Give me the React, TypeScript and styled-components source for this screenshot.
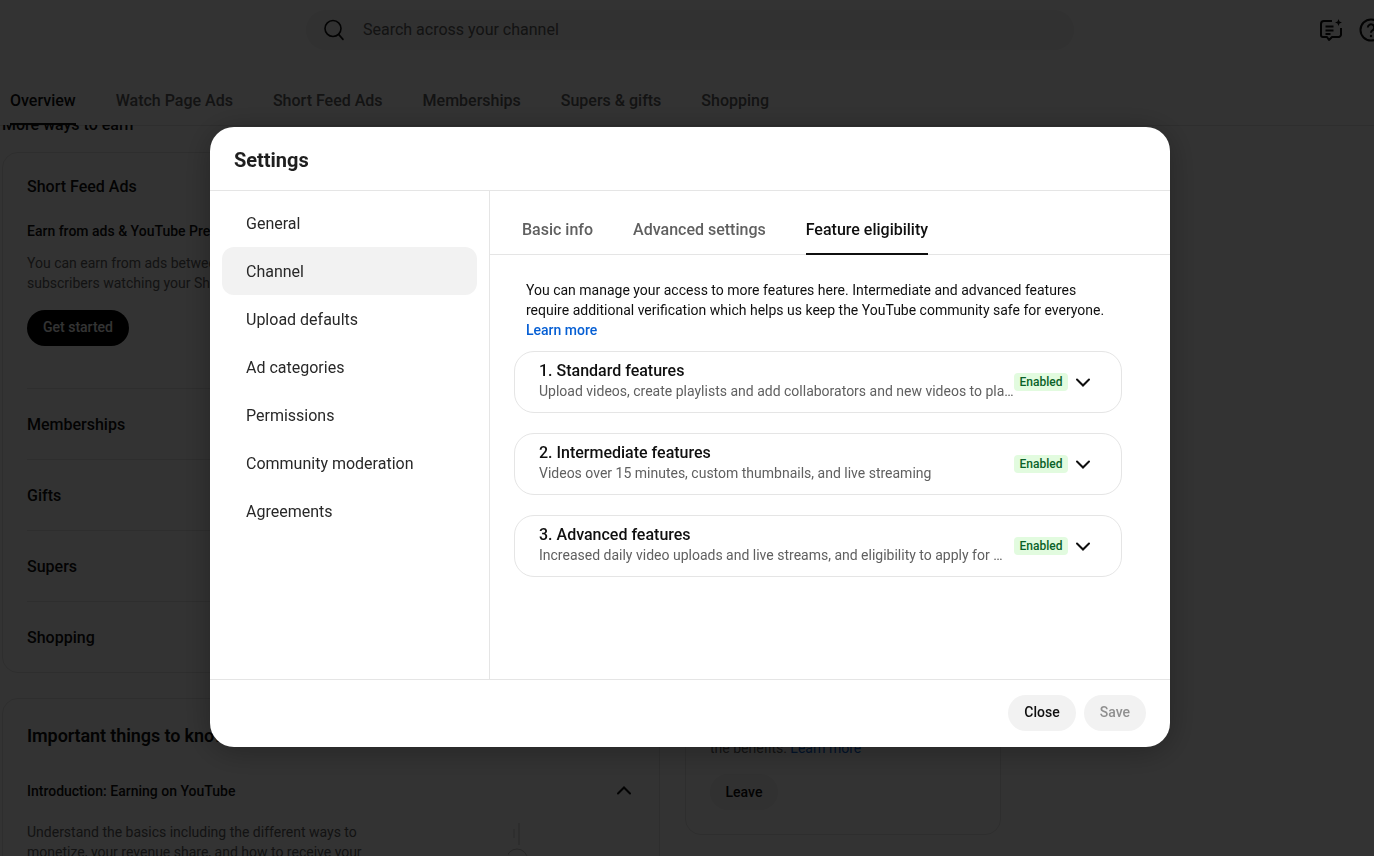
import styled, { createGlobalStyle } from "styled-components";

const GlobalStyle = createGlobalStyle`
  html, body {
    margin: 0;
    height: 100%;
    overflow: hidden;
    background: #fff;
    font-family: Roboto, "Liberation Sans", sans-serif;
    color: #0f0f0f;
  }
  * { box-sizing: border-box; }
`;

const Page = styled.div`
  width: 1374px;
  height: 856px;
  overflow: hidden;
`;

const TopBar = styled.header`
  height: 60px;
  padding: 10px 0 0 306px;
  display: flex;
  align-items: flex-start;
`;

const SearchBox = styled.div`
  width: 768px;
  height: 40px;
  flex-shrink: 0;
  border-radius: 20px;
  background: #f2f2f2;
  display: flex;
  align-items: center;
  gap: 17px;
  padding-left: 16px;
  font-size: 16px;
  color: #606060;
`;

const Placeholder = styled.span`
  margin-top: -2px;
`;

const TopIcons = styled.div`
  display: flex;
  gap: 16px;
  margin-left: 245px;
  margin-top: 8px;
  flex-shrink: 0;
`;

const PageTabs = styled.nav`
  height: 65px;
  display: flex;
  gap: 40px;
  padding: 0 0 0 10px;
  background: #fff;
`;

const PageTab = styled.div<{ $active?: boolean }>`
  height: 65px;
  padding-top: 31px;
  font-size: 16px;
  line-height: 20px;
  font-weight: 500;
  color: ${(p) => (p.$active ? "#0f0f0f" : "#606060")};
  border-bottom: 2px solid ${(p) => (p.$active ? "#0f0f0f" : "transparent")};
`;

const Content = styled.main`
  height: 731px;
  overflow: hidden;
  padding: 0 0 0 2px;
  background: linear-gradient(#e5e5e5, #e5e5e5) 0 0 / 100% 1px no-repeat;
`;

const SectionHeading = styled.h2`
  margin: -9px 0 19px;
  font-size: 16px;
  line-height: 17px;
  font-weight: 500;
`;

const Columns = styled.div`
  display: grid;
  grid-template-columns: 658px 316px;
  column-gap: 25px;
  align-items: start;
`;

const Stack = styled.div`
  display: flex;
  flex-direction: column;
  gap: 25px;
`;

const Card = styled.section<{ $height: number }>`
  height: ${(p) => p.$height}px;
  border: 1px solid #e5e5e5;
  border-radius: 16px;
  padding: 24px;
`;

const CardTitle = styled.h3`
  margin: 0 0 24px;
  font-size: 16px;
  line-height: 20px;
  font-weight: 500;
`;

const Subtitle = styled.div`
  font-size: 14px;
  line-height: 20px;
  font-weight: 500;
`;

const Body = styled.p<{ $top?: number; $bottom?: number; $width?: number }>`
  margin: ${(p) => p.$top ?? 12}px 0 ${(p) => p.$bottom ?? 17}px;
  max-width: ${(p) => p.$width ?? 350}px;
  font-size: 14px;
  line-height: 20px;
  color: #606060;
`;

const BackLink = styled.span`
  color: #065fd4;
`;

const DarkButton = styled.div`
  width: 102px;
  height: 36px;
  padding-bottom: 2px;
  border-radius: 18px;
  background: #000;
  color: #fff;
  font-size: 14px;
  font-weight: 500;
  display: flex;
  align-items: center;
  justify-content: center;
`;

const LightButton = styled.div`
  width: 68px;
  height: 36px;
  border-radius: 18px;
  background: #f2f2f2;
  font-size: 14px;
  font-weight: 500;
  display: flex;
  align-items: center;
  justify-content: center;
`;

const RowList = styled.div`
  margin-top: 42px;
`;

const CardRow = styled.div`
  height: 71px;
  border-top: 1px solid #e5e5e5;
  display: flex;
  align-items: center;
  font-size: 16px;
  font-weight: 500;
`;

const BigTitle = styled.h3`
  margin: 0 0 31px;
  padding-top: 1px;
  font-size: 18px;
  line-height: 24px;
  font-weight: 600;
  letter-spacing: -0.1px;
`;

const AccordionHead = styled.div`
  display: flex;
  justify-content: space-between;
  align-items: center;
  font-size: 14px;
  font-weight: 500;
  line-height: 20px;
  margin-right: -1px;
`;

const LessonRow = styled.div`
  display: flex;
  justify-content: space-between;
`;

const Stepper = styled.svg`
  margin: 20px 105px 0 0;
  flex-shrink: 0;
`;

const Scrim = styled.div`
  position: fixed;
  inset: 0;
  z-index: 10;
  background: rgba(0, 0, 0, 0.8);
  padding: 127px 204px 0 210px;
`;

const Modal = styled.div`
  width: 960px;
  height: 620px;
  background: #fff;
  border-radius: 24px;
  box-shadow: 0 4px 32px rgba(0, 0, 0, 0.3);
  display: flex;
  flex-direction: column;
  overflow: hidden;
`;

const ModalHeader = styled.div`
  height: 64px;
  flex-shrink: 0;
  padding: 2px 24px 0;
  display: flex;
  align-items: center;
  border-bottom: 1px solid #e5e5e5;
  font-size: 20px;
  font-weight: 700;
  letter-spacing: -0.02px;
  color: #1f1f1f;
`;

const ModalBody = styled.div`
  flex: 1;
  min-height: 0;
  display: flex;
`;

const SideNav = styled.nav`
  width: 280px;
  flex-shrink: 0;
  padding: 8px 12px;
  border-right: 1px solid #e5e5e5;
`;

const NavItem = styled.div<{ $active?: boolean }>`
  height: 48px;
  padding-left: 24px;
  display: flex;
  align-items: center;
  border-radius: 12px;
  font-size: 16px;
  background: ${(p) => (p.$active ? "#f2f2f2" : "transparent")};
  color: #282828;
`;

const Panel = styled.div`
  flex: 1;
  min-width: 0;
`;

const PanelTabs = styled.div`
  height: 64px;
  display: flex;
  gap: 40px;
  padding-left: 32px;
  border-bottom: 1px solid #e5e5e5;
`;

const PanelTab = styled.div<{ $active?: boolean }>`
  height: 64px;
  padding-top: 29px;
  font-size: 16px;
  line-height: 20px;
  font-weight: 500;
  color: ${(p) => (p.$active ? "#0f0f0f" : "#606060")};
  border-bottom: 2px solid ${(p) => (p.$active ? "#0f0f0f" : "transparent")};
`;

const PanelContent = styled.div`
  padding: 25px 48px 0 24px;
`;

const Intro = styled.p`
  margin: 0 0 11px;
  padding: 0 8px 0 12px;
  font-size: 14px;
  line-height: 20px;
  color: #0f0f0f;
`;

const IntroLink = styled.span`
  display: block;
  font-weight: 500;
  color: #065fd4;
`;

const Features = styled.div`
  display: flex;
  flex-direction: column;
  gap: 20px;
`;

const Feature = styled.div`
  height: 62px;
  border: 1px solid #e5e5e5;
  border-radius: 20px;
  padding: 0 26px 0 24px;
  display: flex;
  align-items: center;
`;

const FeatureText = styled.div`
  flex: 1;
  min-width: 0;
  padding-bottom: 2px;
`;

const FeatureTitle = styled.div`
  font-size: 16px;
  line-height: 20px;
  font-weight: 500;
`;

const FeatureSub = styled.div`
  font-size: 14px;
  line-height: 20px;
  color: #606060;
  white-space: nowrap;
  overflow: hidden;
  text-overflow: ellipsis;
`;

const Badge = styled.span`
  flex-shrink: 0;
  width: 54px;
  height: 18px;
  border-radius: 4px;
  background: #e2fbdf;
  color: #0a6228;
  font-size: 12px;
  font-weight: 500;
  display: flex;
  align-items: center;
  justify-content: center;
`;

const Chevron = styled.svg`
  flex-shrink: 0;
  margin-left: 3px;
`;

const ModalFooter = styled.div`
  height: 68px;
  flex-shrink: 0;
  border-top: 1px solid #e5e5e5;
  padding: 0 24px 1px;
  display: flex;
  align-items: center;
  justify-content: flex-end;
  gap: 8px;
`;

const FooterButton = styled.div<{ $disabled?: boolean }>`
  height: 36px;
  padding: 0 16px 3px;
  border-radius: 18px;
  background: #f2f2f2;
  font-size: 14px;
  font-weight: 500;
  display: flex;
  align-items: center;
  color: ${(p) => (p.$disabled ? "#909090" : "#0f0f0f")};
`;

const chevronDown =
  "M18.707 8.793a1 1 0 00-1.414 0L12 14.086 6.707 8.793a1 1 0 10-1.414 1.414L12 16.914l6.707-6.707a1 1 0 000-1.414Z";
const chevronUp =
  "M5.293 15.207a1 1 0 001.414 0L12 9.914l5.293 5.293a1 1 0 101.414-1.414L12 7.086l-6.707 6.707a1 1 0 000 1.414Z";

const features = [
  {
    title: "1. Standard features",
    sub: "Upload videos, create playlists and add collaborators and new videos to playlists you own",
  },
  {
    title: "2. Intermediate features",
    sub: "Videos over 15 minutes, custom thumbnails, and live streaming",
  },
  {
    title: "3. Advanced features",
    sub: "Increased daily video uploads and live streams, and eligibility to apply for monetization features",
  },
];

const navItems = [
  "General",
  "Channel",
  "Upload defaults",
  "Ad categories",
  "Permissions",
  "Community moderation",
  "Agreements",
];

export default function App() {
  return (
    <>
      <GlobalStyle />
      <Page>
        <TopBar>
          <SearchBox>
            <svg width="24" height="24" viewBox="0 0 24 24" fill="none" stroke="#0f0f0f" strokeWidth="1.6">
              <circle cx="11" cy="10.5" r="8" />
              <path d="M16.6 16.4 L21 21.4" strokeLinecap="round" />
            </svg>
            <Placeholder>Search across your channel</Placeholder>
          </SearchBox>
          <TopIcons>
            <svg width="24" height="24" viewBox="0 0 24 24" fill="none" stroke="#0f0f0f" strokeWidth="2">
              <path d="M13 3H5a3 3 0 0 0-3 3v11a2 2 0 0 0 2 2h4l2 3 3-3h7a3 3 0 0 0 2-2V10" strokeLinejoin="round" />
              <path d="M6.5 8.5h8M6.5 12.5h8M6.5 16h5" />
              <path d="M19.5 1l1 2.500L23 4.500l-2.500 1-1 2.500-1-2.500L16 4.500l2.500-1z" fill="#0f0f0f" stroke="none" />
            </svg>
            <svg width="24" height="24" viewBox="0 0 24 24" fill="none" stroke="#0f0f0f" strokeWidth="2">
              <circle cx="12" cy="12" r="10.5" />
              <path d="M8.800 9.500a3.200 3.200 0 1 1 5 2.700c-1.100.7-1.800 1.400-1.800 2.600" />
              <circle cx="12" cy="18" r="1.200" fill="#0f0f0f" stroke="none" />
            </svg>
          </TopIcons>
        </TopBar>
        <PageTabs>
          <PageTab $active>Overview</PageTab>
          <PageTab>Watch Page Ads</PageTab>
          <PageTab>Short Feed Ads</PageTab>
          <PageTab>Memberships</PageTab>
          <PageTab>Supers &amp; gifts</PageTab>
          <PageTab>Shopping</PageTab>
        </PageTabs>
        <Content>
          <SectionHeading>More ways to earn</SectionHeading>
          <Columns>
            <Stack>
              <Card $height={521}>
                <CardTitle>Short Feed Ads</CardTitle>
                <Subtitle>Earn from ads &amp; YouTube Premium</Subtitle>
                <Body $width={500}>
                  You can earn from ads between videos in the Shorts Feed and from Premium
                  subscribers watching your Shorts.
                </Body>
                <DarkButton>Get started</DarkButton>
                <RowList>
                  <CardRow>Memberships</CardRow>
                  <CardRow>Gifts</CardRow>
                  <CardRow>Supers</CardRow>
                  <CardRow>Shopping</CardRow>
                </RowList>
              </Card>
              <Card $height={300}>
                <BigTitle>Important things to know</BigTitle>
                <AccordionHead>
                  Introduction: Earning on YouTube
                  <svg width="24" height="24" viewBox="0 0 24 24" fill="#0f0f0f">
                    <path d={chevronUp} />
                  </svg>
                </AccordionHead>
                <LessonRow>
                  <Body $top={19}>
                    Understand the basics including the different ways to monetize, your revenue
                    share, and how to receive your payments.
                  </Body>
                  <Stepper width="22" height="50" viewBox="0 0 22 50" fill="none" stroke="#c4c4c4">
                    <path d="M11 0V22" />
                    <path d="M6 6V15" strokeWidth="2" stroke="#e5e5e5" />
                    <circle cx="9" cy="36.500" r="10.500" />
                  </Stepper>
                </LessonRow>
              </Card>
            </Stack>
            <Stack>
              <Card $height={521} />
              <Card $height={137}>
                <Body $top={-5} $bottom={16}>
                  You can leave this program and lose all of
                  <br />
                  the benefits. <BackLink>Learn more</BackLink>
                </Body>
                <LightButton>Leave</LightButton>
              </Card>
            </Stack>
          </Columns>
        </Content>
      </Page>
      <Scrim>
        <Modal>
          <ModalHeader>Settings</ModalHeader>
          <ModalBody>
            <SideNav>
              {navItems.map((item) => (
                <NavItem key={item} $active={item === "Channel"}>
                  {item}
                </NavItem>
              ))}
            </SideNav>
            <Panel>
              <PanelTabs>
                <PanelTab>Basic info</PanelTab>
                <PanelTab>Advanced settings</PanelTab>
                <PanelTab $active>Feature eligibility</PanelTab>
              </PanelTabs>
              <PanelContent>
                <Intro>
                  You can manage your access to more features here. Intermediate and advanced
                  features require additional verification which helps us keep the YouTube
                  community safe for everyone.
                  <IntroLink>Learn more</IntroLink>
                </Intro>
                <Features>
                  {features.map((f) => (
                    <Feature key={f.title}>
                      <FeatureText>
                        <FeatureTitle>{f.title}</FeatureTitle>
                        <FeatureSub>{f.sub}</FeatureSub>
                      </FeatureText>
                      <Badge>Enabled</Badge>
                      <Chevron width="24" height="24" viewBox="0 0 24 24" fill="#0f0f0f">
                        <path d={chevronDown} />
                      </Chevron>
                    </Feature>
                  ))}
                </Features>
              </PanelContent>
            </Panel>
          </ModalBody>
          <ModalFooter>
            <FooterButton>Close</FooterButton>
            <FooterButton $disabled>Save</FooterButton>
          </ModalFooter>
        </Modal>
      </Scrim>
    </>
  );
}
